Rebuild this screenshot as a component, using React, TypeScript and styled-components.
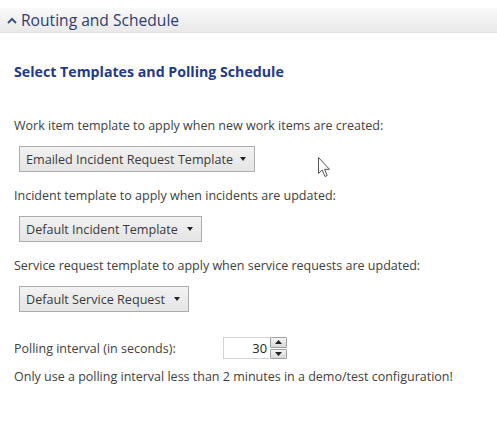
import React from "react";
import styled, { createGlobalStyle } from "styled-components";

const Global = createGlobalStyle`
  html, body { margin: 0; padding: 0; background: #ffffff; }
  body { font-family: "Open Sans", "Noto Sans", sans-serif; color: #404040; }
`;

const Page = styled.div`
  position: relative;
  width: 497px;
  height: 424px;
  padding-top: 8px;
  box-sizing: border-box;
  overflow: hidden;
  background: #fff;
`;

const HeaderBar = styled.div`
  height: 25px;
  box-sizing: border-box;
  display: flex;
  align-items: center;
  gap: 4px;
  padding-left: 7px;
  background: linear-gradient(#f9f9f9, #e9e9e9);
  border-bottom: 1px solid #e0e0e0;
  color: #2e3d70;
  font-size: 15.6px;
`;

const Body = styled.div`
  padding: 29px 14px 0 14px;
  display: flex;
  flex-direction: column;
`;

const SectionTitle = styled.div`
  font-weight: 700;
  font-size: 14.2px;
  color: #1f3a86;
  line-height: 20px;
  margin-bottom: 35px;
`;

const Label = styled.div`
  font-size: 12.5px;
  line-height: 17px;
`;

const Select = styled.div<{ $w: number }>`
  margin: 12px 0 15px 5px;
  width: ${(p) => p.$w}px;
  height: 26px;
  box-sizing: border-box;
  border: 1px solid #acacac;
  background: linear-gradient(#f2f2f2, #e4e4e4);
  display: flex;
  align-items: center;
  justify-content: space-between;
  padding: 0 8px 0 6px;
  font-size: 12.6px;
  color: #3a3a3a;
`;

const Row = styled.div`
  display: flex;
  align-items: center;
  margin-top: 10px;
`;

const RowLabel = styled(Label)`
  width: 209px;
`;

const NumInput = styled.div`
  width: 47px;
  height: 22px;
  box-sizing: border-box;
  border: 1px solid #d4d4d4;
  border-right: none;
  display: flex;
  align-items: center;
  justify-content: flex-end;
  padding-right: 3px;
  font-size: 12.8px;
  color: #222;
`;

const Spinner = styled.div`
  width: 17px;
  height: 22px;
  display: flex;
  flex-direction: column;
  gap: 1px;
`;

const SpinBtn = styled.div`
  flex: 1;
  border: 1px solid #a0a0a0;
  border-radius: 1px;
  background: linear-gradient(#f4f4f4, #d8d8d8);
  display: flex;
  align-items: center;
  justify-content: center;
`;

const Note = styled(Label)`
  margin-top: 9px;
`;

const Cursor = styled.svg`
  position: absolute;
  left: 318px;
  top: 157px;
`;

const Tri = ({ up, w = 7, h = 4 }: { up?: boolean; w?: number; h?: number }) => (
  <svg width={w} height={h} viewBox={`0 0 ${w} ${h}`}>
    <path d={up ? `M0 ${h} L${w / 2} 0 L${w} ${h} Z` : `M0 0 L${w / 2} ${h} L${w} 0 Z`} fill="#222" />
  </svg>
);

const Dropdown = ({ w, children }: { w: number; children: React.ReactNode }) => (
  <Select $w={w}>
    <span>{children}</span>
    <Tri w={6} h={4} />
  </Select>
);

export default function App() {
  return (
    <Page>
      <Global />
      <HeaderBar>
        <svg width="10" height="7" viewBox="0 0 10 7">
          <path d="M1 6 L5 2 L9 6" stroke="#3a5487" strokeWidth="2" fill="none" />
        </svg>
        Routing and Schedule
      </HeaderBar>
      <Body>
        <SectionTitle>Select Templates and Polling Schedule</SectionTitle>
        <Label>Work item template to apply when new work items are created:</Label>
        <Dropdown w={236}>Emailed Incident Request Template</Dropdown>
        <Label>Incident template to apply when incidents are updated:</Label>
        <Dropdown w={183}>Default Incident Template</Dropdown>
        <Label>Service request template to apply when service requests are updated:</Label>
        <Dropdown w={170}>Default Service Request</Dropdown>
        <Row>
          <RowLabel>Polling interval (in seconds):</RowLabel>
          <NumInput>30</NumInput>
          <Spinner>
            <SpinBtn><Tri up /></SpinBtn>
            <SpinBtn><Tri /></SpinBtn>
          </Spinner>
        </Row>
        <Note>Only use a polling interval less than 2 minutes in a demo/test configuration!</Note>
      </Body>
      <Cursor width="13" height="21" viewBox="0 0 13 21">
        <path d="M0.5 0.5 L0.5 16.5 L4.2 13 L7 19.5 L9.2 18.5 L6.5 12.3 L11.5 12.3 Z" fill="#fff" stroke="#555" strokeWidth="1" />
      </Cursor>
    </Page>
  );
}
